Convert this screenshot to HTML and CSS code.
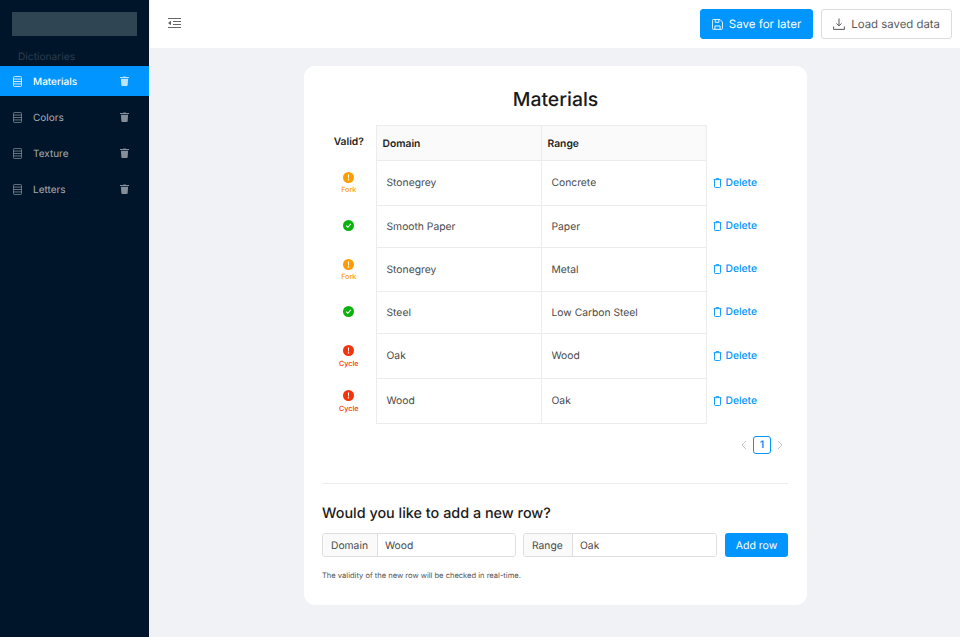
FILE: index.html
```html
<!DOCTYPE html>
<html>
<head>
  <title>Materials</title>
  <link rel="stylesheet" href="styles.css">
</head>
<body>
  <svg class="defs" width="0" height="0">
    <symbol id="book" viewBox="0 0 10 12">
      <path d="M1.5.5h7a1 1 0 0 1 1 1v9a1 1 0 0 1-1 1h-7a1 1 0 0 1-1-1v-9a1 1 0 0 1 1-1zM.5 3.3h9M.5 6h9M.5 8.7h9" fill="none" stroke="currentColor" stroke-width=".9"/>
    </symbol>
    <symbol id="trash" viewBox="0 0 10 11">
      <path d="M3.5 1V.4h3V1H10v1.2H0V1zM1 3h8l-.5 7a1 1 0 0 1-1 1h-5a1 1 0 0 1-1-1z" fill="currentColor"/>
    </symbol>
    <symbol id="trash-line" viewBox="0 0 10 12">
      <path d="M3.3 1.6V.7h3.4v.9M.4 2h9.2M1.4 2v8.4a1 1 0 0 0 1 1h5.2a1 1 0 0 0 1-1V2" fill="none" stroke="currentColor" stroke-width="1.1"/>
    </symbol>
    <symbol id="warn" viewBox="0 0 10 10">
      <circle cx="5" cy="5" r="5" fill="currentColor"/>
      <path d="M4.5 2.2h1l-.1 3.6h-.8zM4.4 6.6h1.2v1.2H4.4z" fill="#fff"/>
    </symbol>
    <symbol id="ok" viewBox="0 0 10 10">
      <circle cx="5" cy="5" r="5" fill="currentColor"/>
      <path d="M2.9 5.1l1.5 1.5 2.7-3" fill="none" stroke="#fff" stroke-width="1"/>
    </symbol>
  </svg>

  <div class="app">
    <aside class="sidebar">
      <div class="logo"></div>
      <div class="side-title">Dictionaries</div>
      <a class="side-item active">
        <svg class="side-book"><use href="#book"/></svg>
        <span class="side-label">Materials</span>
        <svg class="side-trash"><use href="#trash"/></svg>
      </a>
      <a class="side-item">
        <svg class="side-book"><use href="#book"/></svg>
        <span class="side-label">Colors</span>
        <svg class="side-trash"><use href="#trash"/></svg>
      </a>
      <a class="side-item">
        <svg class="side-book"><use href="#book"/></svg>
        <span class="side-label">Texture</span>
        <svg class="side-trash"><use href="#trash"/></svg>
      </a>
      <a class="side-item">
        <svg class="side-book"><use href="#book"/></svg>
        <span class="side-label">Letters</span>
        <svg class="side-trash"><use href="#trash"/></svg>
      </a>
    </aside>

    <div class="main">
      <header class="topbar">
        <svg class="fold" viewBox="0 0 13 10" width="13" height="10">
          <path d="M0 .5h13M5 3.5h8M5 6.5h8M0 9.5h13" fill="none" stroke="#666" stroke-width="1"/>
          <path d="M0 5l3-2.2v4.4z" fill="#666"/>
        </svg>
        <button class="btn btn-primary" type="button">
          <svg viewBox="0 0 12 12" width="11" height="11">
            <path d="M1.5.6h7.2l2.7 2.7v7a1 1 0 0 1-1 1h-9a1 1 0 0 1-1-1V1.6a1 1 0 0 1 1-1zM3.5.6v3h4v-3M3.2 11.3V7.6h5.6v3.7" fill="none" stroke="currentColor"/>
          </svg>
          Save for later
        </button>
        <button class="btn" type="button">
          <svg viewBox="0 0 12 12" width="12" height="12">
            <path d="M6 .5v7.2M3.5 5.4L6 7.9l2.5-2.5M.6 8.5v2.9h10.800V8.500" fill="none" stroke="currentColor"/>
          </svg>
          Load saved data
        </button>
      </header>

      <main class="content">
        <section class="card">
          <h1>Materials</h1>
          <table class="grid">
            <tr class="head">
              <th class="valid-col">Valid?</th>
              <th class="cell">Domain</th>
              <th class="cell">Range</th>
              <th class="action-col"></th>
            </tr>
            <tr class="tall">
              <td class="valid-col fork"><svg class="status"><use href="#warn"/></svg><span>Fork</span></td>
              <td class="cell">Stonegrey</td>
              <td class="cell">Concrete</td>
              <td class="action-col"><a class="del"><svg><use href="#trash-line"/></svg>Delete</a></td>
            </tr>
            <tr>
              <td class="valid-col good"><svg class="status"><use href="#ok"/></svg></td>
              <td class="cell">Smooth Paper</td>
              <td class="cell">Paper</td>
              <td class="action-col"><a class="del"><svg><use href="#trash-line"/></svg>Delete</a></td>
            </tr>
            <tr class="snug">
              <td class="valid-col fork"><svg class="status"><use href="#warn"/></svg><span>Fork</span></td>
              <td class="cell">Stonegrey</td>
              <td class="cell">Metal</td>
              <td class="action-col"><a class="del"><svg><use href="#trash-line"/></svg>Delete</a></td>
            </tr>
            <tr>
              <td class="valid-col good"><svg class="status"><use href="#ok"/></svg></td>
              <td class="cell">Steel</td>
              <td class="cell">Low Carbon Steel</td>
              <td class="action-col"><a class="del"><svg><use href="#trash-line"/></svg>Delete</a></td>
            </tr>
            <tr class="tall">
              <td class="valid-col cycle"><svg class="status"><use href="#warn"/></svg><span>Cycle</span></td>
              <td class="cell">Oak</td>
              <td class="cell">Wood</td>
              <td class="action-col"><a class="del"><svg><use href="#trash-line"/></svg>Delete</a></td>
            </tr>
            <tr class="tall">
              <td class="valid-col cycle"><svg class="status"><use href="#warn"/></svg><span>Cycle</span></td>
              <td class="cell">Wood</td>
              <td class="cell">Oak</td>
              <td class="action-col"><a class="del"><svg><use href="#trash-line"/></svg>Delete</a></td>
            </tr>
          </table>

          <div class="pager">
            <svg viewBox="0 0 6 10" width="6" height="10"><path d="M5 1L1 5l4 4" fill="none" stroke="#c4c4c4"/></svg>
            <span class="page">1</span>
            <svg viewBox="0 0 6 10" width="6" height="10"><path d="M1 1l4 4-4 4" fill="none" stroke="#c4c4c4"/></svg>
          </div>

          <hr class="rule">

          <h2>Would you like to add a new row?</h2>
          <div class="add-row">
            <div class="field">
              <span class="addon">Domain</span>
              <input class="field-input" type="text" value="Wood">
            </div>
            <div class="field">
              <span class="addon">Range</span>
              <input class="field-input" type="text" value="Oak">
            </div>
            <button class="btn-add" type="button">Add row</button>
          </div>
          <p class="note">The validity of the new row will be checked in real-time.</p>
        </section>
      </main>
    </div>
  </div>
</body>
</html>
```

FILE: styles.css
```css
* {
  box-sizing: border-box;
}

html, body {
  height: 100%;
}

body {
  margin: 0;
  font-family: Inter, "Liberation Sans", sans-serif;
  font-size: 10.3px;
  text-rendering: geometricPrecision;
  color: #4a4a4a;
  background-color: #f0f2f5;
}

.defs {
  display: none;
}

.app {
  display: flex;
  height: 637px;
  overflow: hidden;
}

.sidebar {
  width: 149px;
  flex: none;
  background-color: #001529;
  padding-top: 12px;
  color: rgba(255, 255, 255, 0.65);
}

.logo {
  width: 125px;
  height: 24px;
  margin-left: 12px;
  background-color: #2f4553;
}

.side-title {
  margin: 15px 0 2px 18px;
  height: 13px;
  line-height: 13px;
  font-size: 10.2px;
  color: #2b3d50;
}

.side-item {
  display: flex;
  align-items: center;
  height: 30px;
  margin-bottom: 6px;
  padding-left: 13px;
}

.side-item.active {
  background-color: #0095ff;
  color: #fff;
}

.side-item.active .side-label {
  font-weight: 500;
}

.side-book {
  width: 9px;
  height: 11px;
  flex: none;
  opacity: 0.75;
}

.active .side-book {
  opacity: 1;
}

.side-label {
  flex: 1;
  margin-left: 11px;
  padding-top: 2px;
  font-size: 10px;
}

.side-trash {
  width: 9px;
  height: 10px;
  flex: none;
  margin-right: 20px;
  opacity: 0.8;
}

.active .side-trash {
  opacity: 0.75;
}

.main {
  flex: 1;
  display: flex;
  flex-direction: column;
  min-width: 0;
  margin-left: 1px;
}

.topbar {
  display: flex;
  align-items: center;
  gap: 8px;
  height: 48px;
  flex: none;
  padding: 0 8px 0 18px;
  background-color: #fff;
}

.fold {
  margin-right: auto;
  margin-bottom: 3px;
}

.btn {
  display: flex;
  align-items: center;
  gap: 6px;
  height: 30px;
  padding: 0 11px;
  border: 1px solid #dcdcdc;
  border-radius: 3px;
  background-color: #fff;
  color: #595959;
  font: 11.4px Inter, "Liberation Sans", sans-serif;
  text-rendering: geometricPrecision;
}

.btn-primary {
  background-color: #0095ff;
  border-color: #0095ff;
  color: #fff;
  font-size: 11.55px;
}

.content {
  flex: 1;
  padding-top: 18px;
}

.card {
  width: 503px;
  height: 539px;
  margin-left: 154px;
  padding: 0 18px;
  background-color: #fff;
  border-radius: 11px;
}

h1 {
  margin: 0;
  padding-top: 21px;
  height: 59px;
  line-height: 24px;
  text-align: center;
  font-size: 19.4px;
  font-weight: 500;
  color: #1a1a1a;
}

.grid {
  border-collapse: collapse;
  table-layout: fixed;
  width: 465px;
}

.grid tr {
  height: 42px;
}

.grid tr.head {
  height: 35px;
}

.grid tr.tall {
  height: 45px;
}

.grid tr.snug {
  height: 44px;
}

.grid th {
  font-weight: 600;
  color: #1f1f1f;
  text-align: left;
}

.valid-col {
  width: 54px;
  padding: 0;
  text-align: center;
  line-height: 1;
}

.grid th.valid-col {
  text-align: center;
  padding-bottom: 2px;
  border: 0;
}

.cell {
  width: 165px;
  padding: 0 0 0 10px;
  border: 1px solid #ececec;
}

.grid th.cell {
  padding: 2px 0 0 6px;
  background-color: #fafafa;
}

.action-col {
  width: 81px;
  padding: 0 0 1px 6px;
}

.status {
  display: block;
  width: 11px;
  height: 11px;
  margin: 0 auto;
}

.valid-col span {
  display: block;
  margin-top: 3px;
  font-size: 7.2px;
  font-weight: 500;
}

.fork {
  color: #ff9d00;
}

.good {
  padding-bottom: 2px;
  color: #0bb20c;
}

.cycle {
  color: #f5320a;
}

.cycle span {
  margin-top: 4px;
}

.del {
  display: flex;
  align-items: center;
  gap: 4px;
  color: #0095ff;
  font-weight: 500;
}

.del svg {
  width: 9px;
  height: 10px;
  flex: none;
}

.pager {
  display: flex;
  align-items: center;
  justify-content: flex-end;
  gap: 6px;
  height: 18px;
  margin-top: 12px;
  padding-right: 6px;
}

.page {
  width: 18px;
  height: 18px;
  line-height: 16px;
  text-align: center;
  border: 1px solid #0095ff;
  border-radius: 3px;
  color: #0095ff;
  font-weight: 600;
}

.rule {
  width: 466px;
  margin: 29px 0 0;
  border: 0;
  border-top: 1px solid #ececec;
}

h2 {
  margin: 0;
  padding-top: 20px;
  height: 49px;
  line-height: 20px;
  font-size: 14.4px;
  font-weight: 500;
  color: #1a1a1a;
}

.add-row {
  display: flex;
  gap: 7px;
  width: 466px;
}

.field {
  display: flex;
  width: 194px;
  height: 24px;
  border: 1px solid #dedede;
  border-radius: 3px;
  overflow: hidden;
}

.addon {
  flex: none;
  width: 55px;
  padding-left: 8px;
  line-height: 24px;
  background-color: #fafafa;
  border-right: 1px solid #dedede;
}

.field + .field .addon {
  width: 49px;
}

.field-input {
  flex: 1;
  min-width: 0;
  padding: 2px 0 0 7px;
  border: 0;
  color: #4a4a4a;
  font: 10.3px Inter, "Liberation Sans", sans-serif;
  text-rendering: geometricPrecision;
}

.btn-add {
  flex: 1;
  margin-left: 1px;
  border: 0;
  border-radius: 3px;
  background-color: #0095ff;
  color: #fff;
  font: 10.5px Inter, "Liberation Sans", sans-serif;
  text-rendering: geometricPrecision;
}

.note {
  margin: 14px 0 0;
  font-size: 7.55px;
  line-height: 10px;
  color: #555;
}
```
